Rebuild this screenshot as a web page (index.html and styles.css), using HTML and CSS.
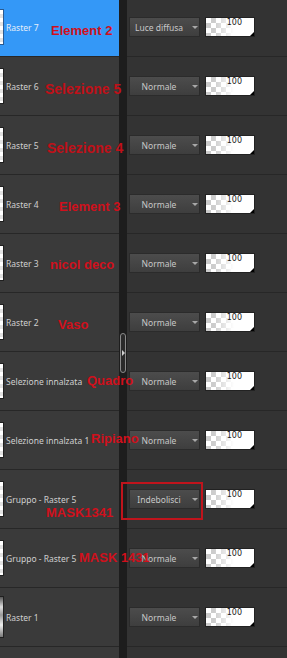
FILE: index.html
```html
<!DOCTYPE html>
<html>
<head>
<meta charset="utf-8">
<link rel="stylesheet" href="styles.css">
</head>
<body>
<div class="panel">
  <div class="col-left">
    <div class="row sel"><span class="thumb"></span><span class="name">Raster 7</span><span class="note n1">Element 2</span></div>
    <div class="row"><span class="thumb"></span><span class="name">Raster 6</span><span class="note n2">Selezione 5</span></div>
    <div class="row"><span class="thumb"></span><span class="name">Raster 5</span><span class="note n3">Selezione 4</span></div>
    <div class="row"><span class="thumb"></span><span class="name">Raster 4</span><span class="note n4">Element 3</span></div>
    <div class="row"><span class="thumb"></span><span class="name">Raster 3</span><span class="note n5">nicol deco</span></div>
    <div class="row"><span class="thumb"></span><span class="name">Raster 2</span><span class="note n6">Vaso</span></div>
    <div class="row"><span class="thumb"></span><span class="name">Selezione innalzata</span><span class="note n7">Quadro</span></div>
    <div class="row"><span class="thumb"></span><span class="name">Selezione innalzata 1</span><span class="note n8">Ripiano</span></div>
    <div class="row"><span class="thumb"></span><span class="name">Gruppo - Raster 5</span><span class="note n9">MASK1341</span></div>
    <div class="row"><span class="thumb"></span><span class="name">Gruppo - Raster 5</span><span class="note n10">MASK 1431</span></div>
    <div class="row"><span class="thumb gray"></span><span class="name">Raster 1</span></div>
    <div class="row"></div>
  </div>
  <div class="scroll"><div class="handle"><span class="tri"></span></div></div>
  <div class="col-right">
    <div class="row"><div class="dd"><span class="dd-text">Luce diffusa</span><span class="arrow"></span></div><div class="op"><span>100</span></div></div>
    <div class="row"><div class="dd"><span class="dd-text">Normale</span><span class="arrow"></span></div><div class="op"><span>100</span></div></div>
    <div class="row"><div class="dd"><span class="dd-text">Normale</span><span class="arrow"></span></div><div class="op"><span>100</span></div></div>
    <div class="row"><div class="dd"><span class="dd-text">Normale</span><span class="arrow"></span></div><div class="op"><span>100</span></div></div>
    <div class="row"><div class="dd"><span class="dd-text">Normale</span><span class="arrow"></span></div><div class="op"><span>100</span></div></div>
    <div class="row"><div class="dd"><span class="dd-text">Normale</span><span class="arrow"></span></div><div class="op"><span>100</span></div></div>
    <div class="row"><div class="dd"><span class="dd-text">Normale</span><span class="arrow"></span></div><div class="op"><span>100</span></div></div>
    <div class="row"><div class="dd"><span class="dd-text">Normale</span><span class="arrow"></span></div><div class="op"><span>100</span></div></div>
    <div class="row"><div class="dd"><span class="dd-text">Indebolisci</span><span class="arrow"></span></div><div class="op"><span>100</span></div><span class="redbox"></span></div>
    <div class="row"><div class="dd"><span class="dd-text">Normale</span><span class="arrow"></span></div><div class="op"><span>100</span></div></div>
    <div class="row"><div class="dd"><span class="dd-text">Normale</span><span class="arrow"></span></div><div class="op"><span>100</span></div></div>
    <div class="row"></div>
  </div>
</div>
</body>
</html>
```

FILE: styles.css
```css
html, body {
  margin: 0;
  padding: 0;
  background: #333333;
  overflow: hidden;
  height: 658px;
}
.panel {
  display: flex;
  margin-top: -2px;
  height: 660px;
  overflow: hidden;
  font-family: "Noto Sans", "Open Sans", sans-serif;
}
.col-left {
  width: 119px;
  flex: none;
  background: #3a3a3a;
}
.scroll {
  width: 8px;
  flex: none;
  background: #1d1d1d;
  position: relative;
}
.col-right {
  flex: 1;
  background: #333333;
}
.row {
  height: 58px;
  border-bottom: 1px solid #272727;
  display: flex;
  align-items: center;
  position: relative;
}
.col-left .row.sel {
  background: #3498f7;
}
.thumb {
  width: 3px;
  height: 34px;
  flex: none;
  background: repeating-conic-gradient(#e2e2e2 0 25%, #ffffff 0 50%) 0 0 / 8px 8px;
  border: 1px solid #202020;
  border-left: none;
}
.sel .thumb {
  border-color: #2a5a90;
}
.thumb.gray {
  height: 40px;
  background: linear-gradient(to bottom, #555 0, #ddd 25%, #999 45%, #eee 70%, #777 100%);
}
.name {
  margin-left: 2px;
  font-size: 8.5px;
  color: #cfcfcf;
  white-space: nowrap;
}
.sel .name {
  color: #e4eefa;
}
.note {
  position: absolute;
  z-index: 5;
  font-family: "Liberation Sans", Arial, sans-serif;
  font-weight: bold;
  font-size: 13px;
  color: #d0101c;
  white-space: nowrap;
  line-height: 1;
}
.n1 { left: 51px; top: 26px; }
.n2 { left: 45px; top: 25px; font-size: 14px; color: #c01018; }
.n3 { left: 47px; top: 25px; font-size: 14px; color: #c01018; }
.n4 { left: 59px; top: 25px; }
.n5 { left: 50px; top: 24px; }
.n6 { left: 58px; top: 25px; }
.n7 { left: 87px; top: 22px; }
.n8 { left: 91px; top: 21px; }
.n9 { left: 46px; top: 36px; }
.n10 { left: 79px; top: 22px; }
.col-right .row {
  padding-left: 2px;
}
.dd {
  width: 71px;
  height: 20px;
  box-sizing: border-box;
  border: 1px solid #2b2b2b;
  background: linear-gradient(to bottom, #4c4c4c, #3e3e3e);
  display: flex;
  align-items: center;
  flex: none;
}
.dd-text {
  width: 58px;
  text-align: center;
  font-size: 8.5px;
  color: #c8c8c8;
  white-space: nowrap;
}
.arrow {
  margin-left: 4px;
  width: 0;
  height: 0;
  border-left: 3px solid transparent;
  border-right: 3px solid transparent;
  border-top: 3px solid #a8a8a8;
}
.op {
  margin-left: 5px;
  width: 50px;
  height: 20px;
  box-sizing: border-box;
  border: 1px solid #222;
  background:
    linear-gradient(to right, rgba(255,255,255,0) 0, rgba(255,255,255,0) 8px, #fff 28px),
    repeating-conic-gradient(#cccccc 0 25%, #ffffff 0 50%) 0 0 / 10px 10px;
  position: relative;
  flex: none;
}
.op span {
  position: absolute;
  right: 12px;
  top: 0px;
  font-family: "DejaVu Sans", sans-serif;
  font-size: 8px;
  color: #222;
  line-height: 1.2;
}
.op::after {
  content: "";
  position: absolute;
  right: 0;
  bottom: 0;
  width: 0;
  height: 0;
  border-left: 4px solid transparent;
  border-bottom: 4px solid #000;
}
.redbox {
  position: absolute;
  left: -6px;
  top: 12px;
  width: 82px;
  height: 38px;
  box-sizing: border-box;
  border: 2px solid #c0141c;
  z-index: 4;
}
.handle {
  position: absolute;
  left: 1px;
  top: 335px;
  width: 6px;
  height: 40px;
  box-sizing: border-box;
  border: 1px solid #8a8a8a;
  border-radius: 3px;
  background: #2a2a2a;
}
.tri {
  position: absolute;
  left: 1px;
  top: 16px;
  width: 0;
  height: 0;
  border-top: 3px solid transparent;
  border-bottom: 3px solid transparent;
  border-left: 3px solid #cfcfcf;
}
```
